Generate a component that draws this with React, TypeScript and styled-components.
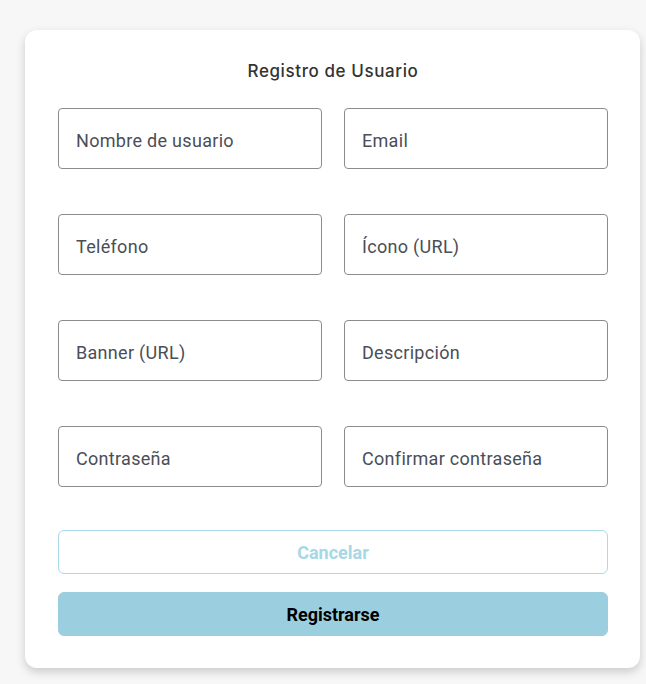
import React from "react";
import styled, { createGlobalStyle } from "styled-components";

const Global = createGlobalStyle`
  html, body { margin: 0; padding: 0; background: #f7f7f7; }
  body { font-family: Roboto, "Liberation Sans", sans-serif; }
  * { box-sizing: border-box; }
`;

const Page = styled.div`
  padding: 30px 6px 16px 25px;
`;

const Card = styled.form`
  width: 615px;
  background: #ffffff;
  border-radius: 12px;
  box-shadow: 0 4px 10px rgba(0, 0, 0, 0.18);
  padding: 29px 32px 32px 33px;
  display: flex;
  flex-direction: column;
`;

const Title = styled.h2`
  margin: 0 0 25px;
  font-family: Inter, "Open Sans", sans-serif;
  font-weight: 500;
  font-size: 17px;
  line-height: 24px;
  letter-spacing: 0.6px;
  color: #333333;
  text-align: center;
`;

const Grid = styled.div`
  display: grid;
  grid-template-columns: 1fr 1fr;
  column-gap: 22px;
  row-gap: 45px;
`;

const Field = styled.input`
  height: 61px;
  width: 100%;
  border: 1px solid #8c8c90;
  border-radius: 4px;
  padding: 3px 17px 0;
  font-family: Roboto, "Liberation Sans", sans-serif;
  font-size: 18px;
  letter-spacing: 0.3px;
  color: #333;
  background: #fff;
  outline: none;
  &::placeholder {
    color: #4a4e57;
    opacity: 1;
  }
`;

const Actions = styled.div`
  margin-top: 43px;
  display: flex;
  flex-direction: column;
  gap: 18px;
`;

const Button = styled.button<{ $primary?: boolean }>`
  height: 44px;
  width: 100%;
  border-radius: 6px;
  font-family: Roboto, "Liberation Sans", sans-serif;
  font-weight: 700;
  font-size: 18px;
  cursor: pointer;
  border: 1px solid ${(p) => (p.$primary ? "#9bcfdf" : "#a9dbe8")};
  background: ${(p) => (p.$primary ? "#9bcfdf" : "#ffffff")};
  color: ${(p) => (p.$primary ? "#000000" : "#a6d8e6")};
`;

const fields = [
  "Nombre de usuario",
  "Email",
  "Teléfono",
  "Ícono (URL)",
  "Banner (URL)",
  "Descripción",
  "Contraseña",
  "Confirmar contraseña",
];

export default function App() {
  return (
    <>
      <Global />
      <Page>
        <Card onSubmit={(e) => e.preventDefault()}>
          <Title>Registro de Usuario</Title>
          <Grid>
            {fields.map((f) => (
              <Field
                key={f}
                placeholder={f}
                type={f.startsWith("Contr") || f.startsWith("Confirmar") ? "password" : "text"}
              />
            ))}
          </Grid>
          <Actions>
            <Button type="button">Cancelar</Button>
            <Button type="submit" $primary>
              Registrarse
            </Button>
          </Actions>
        </Card>
      </Page>
    </>
  );
}
